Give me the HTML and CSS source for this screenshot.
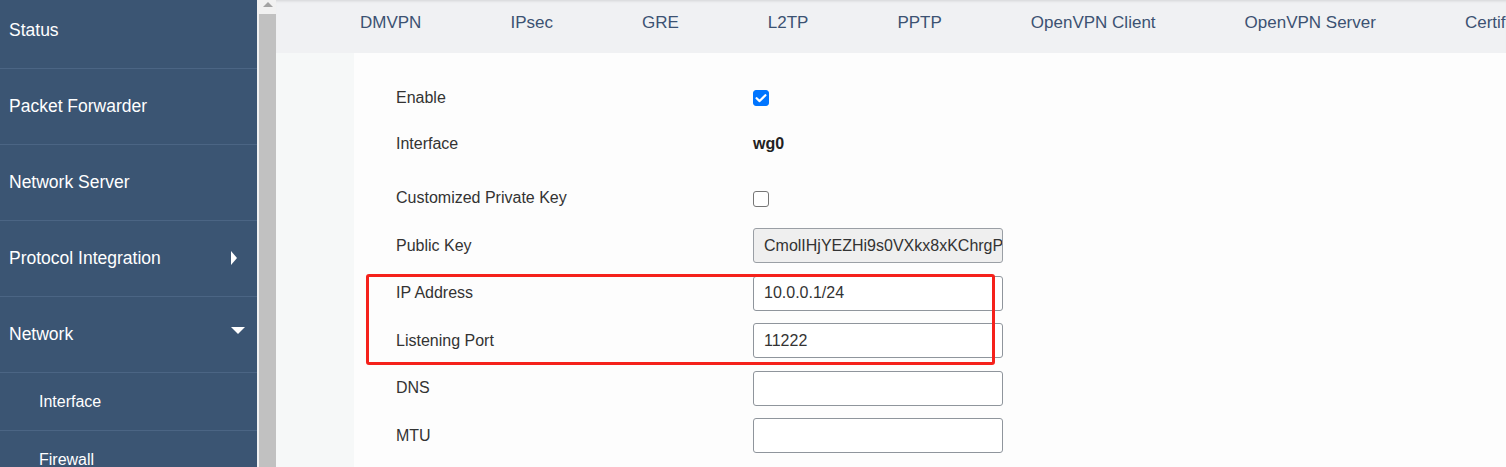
FILE: index.html
```html
<!DOCTYPE html>
<html>
<head>
<meta charset="utf-8">
<link rel="stylesheet" href="styles.css">
</head>
<body>
<div class="app">
  <nav class="sidebar">
    <div class="menu">
      <div class="item first">Status</div>
      <div class="item">Packet Forwarder</div>
      <div class="item">Network Server</div>
      <div class="item">Protocol Integration<span class="arrow-right"></span></div>
      <div class="item">Network<span class="arrow-down"></span></div>
      <div class="item sub">Interface</div>
      <div class="item sub">Firewall</div>
    </div>
  </nav>
  <div class="scrollbar">
    <div class="scroll-up"><span class="tri"></span></div>
    <div class="thumb"></div>
  </div>
  <main class="main">
    <div class="tabs">
      <span class="tab">DMVPN</span>
      <span class="tab">IPsec</span>
      <span class="tab">GRE</span>
      <span class="tab">L2TP</span>
      <span class="tab">PPTP</span>
      <span class="tab">OpenVPN Client</span>
      <span class="tab">OpenVPN Server</span>
      <span class="tab">Certificate Manager</span>
    </div>
    <div class="body">
      <div class="panel">
        <div class="form">
          <div class="row r-enable">
            <label class="lbl">Enable</label>
            <span class="check checked"><svg viewBox="0 0 16 16" width="16" height="16"><path d="M3.6 8.2 L6.6 11.1 L12.4 5.2" fill="none" stroke="#fff" stroke-width="2.2" stroke-linecap="round" stroke-linejoin="round"/></svg></span>
          </div>
          <div class="row r-iface">
            <label class="lbl">Interface</label>
            <span class="val">wg0</span>
          </div>
          <div class="row">
            <label class="lbl">Customized Private Key</label>
            <span class="check"></span>
          </div>
          <div class="row">
            <label class="lbl">Public Key</label>
            <div class="input disabled">CmolIHjYEZHi9s0VXkx8xKChrgPz</div>
          </div>
          <div class="row">
            <label class="lbl">IP Address</label>
            <div class="input">10.0.0.1/24</div>
          </div>
          <div class="row">
            <label class="lbl">Listening Port</label>
            <div class="input">11222</div>
          </div>
          <div class="row">
            <label class="lbl">DNS</label>
            <div class="input"></div>
          </div>
          <div class="row">
            <label class="lbl">MTU</label>
            <div class="input"></div>
          </div>
          <div class="highlight"></div>
        </div>
      </div>
    </div>
  </main>
</div>
</body>
</html>
```

FILE: styles.css
```css
* { box-sizing: border-box; }
html, body { margin: 0; padding: 0; height: 100%; overflow: hidden; }
body {
  font-family: "Liberation Sans", Arial, sans-serif;
  background: #fdfdfd;
  color: #333;
}
.app { display: flex; height: 467px; width: 1506px; overflow: hidden; }

.sidebar {
  width: 257px;
  flex: none;
  background: #3b5573;
  overflow: hidden;
}
.menu { margin-top: -7px; }
.item {
  height: 76px;
  border-bottom: 1px solid #4b6584;
  display: flex;
  align-items: center;
  padding-left: 9px;
  color: #fff;
  font-size: 17.5px;
}
.item.sub {
  height: 58px;
  padding-left: 39px;
  font-size: 16px;
}
.arrow-right {
  margin-left: auto;
  margin-right: 20px;
  width: 0; height: 0;
  border-top: 7px solid transparent;
  border-bottom: 7px solid transparent;
  border-left: 6px solid #fff;
  margin-top: -2px;
}
.arrow-down {
  margin-left: auto;
  margin-right: 12px;
  width: 0; height: 0;
  border-left: 7px solid transparent;
  border-right: 7px solid transparent;
  border-top: 7px solid #fff;
  margin-top: -9px;
}

.scrollbar {
  width: 19px;
  flex: none;
  background: #f1f1f1;
  display: flex;
  flex-direction: column;
  padding-left: 2px;
}
.scroll-up { height: 14px; display: flex; justify-content: center; padding-top: 2px; }
.tri {
  width: 0; height: 0;
  border-left: 5px solid transparent;
  border-right: 5px solid transparent;
  border-bottom: 5px solid #a3a3a3;
}
.thumb { flex: 1; background: #c1c1c1; }

.main { flex: 1; display: flex; flex-direction: column; min-width: 0; }
.tabs {
  height: 53px;
  flex: none;
  background: #f0f1f3;
  box-shadow: inset 0 3px 3px -2px rgba(0,0,0,0.12);
  display: flex;
  align-items: center;
  white-space: nowrap;
  padding-left: 38px;
  padding-bottom: 7px;
  overflow: hidden;
}
.tab {
  color: #3c5272;
  font-size: 17px;
  padding: 0 44.5px;
  flex: none;
}
.tab:first-child { padding-left: 46px; }

.body {
  flex: 1;
  background: #f6f8f8;
  padding-left: 78px;
  display: flex;
}
.panel { flex: 1; background: #fdfdfd; }
.form { position: relative; padding: 27px 0 0 42px; }
.row {
  display: flex;
  align-items: center;
  height: 35px;
  margin-bottom: 12.6px;
}
.r-enable { margin-bottom: 11px; }
.r-iface { margin-bottom: 19.5px; }
.lbl { width: 357px; flex: none; font-size: 16px; color: #333; }
.val { font-weight: bold; font-size: 16px; color: #222; }
.check {
  width: 16px; height: 16px;
  border: 1.5px solid #767676;
  border-radius: 3px;
  background: #fff;
  display: block;
  margin-top: 1px;
}
.check.checked { background: #0075ff; border-color: #0075ff; padding: 0; }
.check.checked svg { display: block; margin: -1.5px; }
.input {
  width: 250px;
  height: 35px;
  border: 1px solid #8f959c;
  border-radius: 3px;
  background: #fff;
  padding: 0 10px;
  display: flex;
  align-items: center;
  font-size: 16px;
  color: #333;
  overflow: hidden;
  white-space: nowrap;
}
.input.disabled { background: #efefef; border-color: #9a9fa5; }
.highlight {
  position: absolute;
  left: 12px;
  top: 221px;
  width: 629px;
  height: 91px;
  border: 3px solid #f5211b;
  border-radius: 3px;
  pointer-events: none;
}
```
